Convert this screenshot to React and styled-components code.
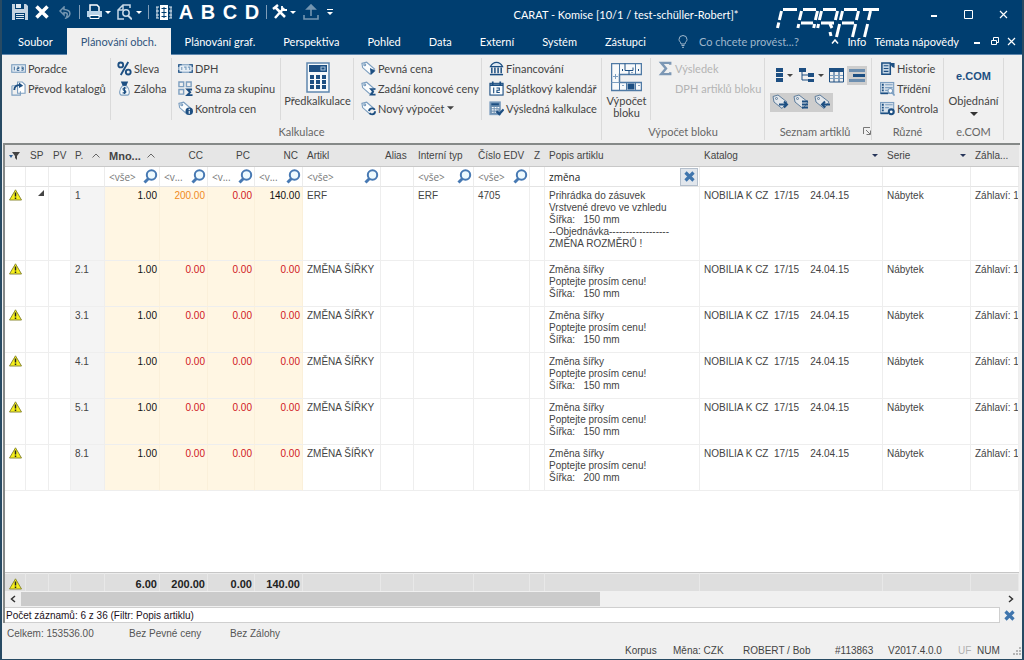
import styled, { createGlobalStyle } from "styled-components"

const NAVY = "#003e70"
const INK = "#1d4f82"
const SOFT = "#7d9fc0"

const GlobalStyle = createGlobalStyle`
* { box-sizing: border-box; }
body { margin: 0; background: #f0f0f0; }
button, input {
  font: inherit;
  color: inherit;
  border: 0;
  padding: 0;
  margin: 0;
  background: none;
}
svg { display: block; flex: none; }
`

const Window = styled.div`
display:flex;
flex-direction:column;
min-height:100vh;
border:solid #274a63;
border-width:0 2px 1px 2px;
background:#f0f0f0;
font-family:Lato, "Noto Sans", sans-serif;
font-size:11px;
color:#444;
`

/* header */
const Header = styled.header`
position:relative;
background:${NAVY};
color:#fff;
`
const TitleBar = styled.div`
display:flex;
align-items:center;
height:28px;
padding:0 1px 4px 8px;
`
const QuickTools = styled.div`
display:flex;
align-items:center;
`
const ToolButton = styled.button`
display:flex;
align-items:center;
justify-content:center;
gap:2px;
width:${props => props.$w || 22}px;
height:22px;
opacity:${props => props.$dim ? 0.45 : 1};
`
const LetterButton = styled(ToolButton)`
font-family:"Liberation Sans", Arial, sans-serif;
font-size:20px;
font-weight:bold;
line-height:22px;
`
const ToolLine = styled.span`
width:1px;
height:14px;
margin:0 3px;
background:#7f9db8;
`
const Title = styled.h1`
flex:1;
margin:0;
padding-top:5px;
font-size:11px;
font-weight:normal;
line-height:16px;
text-align:center;
white-space:nowrap;
`
const WindowButtons = styled.div`
display:flex;
padding-top:4px;
`
const WindowButton = styled.button`
display:flex;
align-items:center;
justify-content:center;
width:35px;
height:20px;
`
const Logo = styled.svg`
position:absolute;
right:142px;
top:6px;
`
const TabBar = styled.nav`
display:flex;
align-items:stretch;
height:27px;
padding-left:2px;
border-bottom:1px solid #5d86ad;
white-space:nowrap;
`
const Tab = styled.button`
padding:0 14px;
line-height:26px;
height:27px;
background:${props => props.$active ? "#f0f0f0" : "none"};
color:${props => props.$active ? "#31557d" : "#fff"};
`
const AskLabel = styled.label`
display:flex;
align-items:center;
gap:11px;
padding-left:18px;
flex:1;
min-width:0;
color:#9fb6cb;
`
const AskInput = styled.input`
flex:1;
min-width:0;
width:100px;
&::placeholder { color:#9fb6cb; opacity:1; }
`
const TabTools = styled.div`
display:flex;
align-items:center;
`
const TabTool = styled.button`
display:flex;
align-items:center;
justify-content:center;
height:26px;
padding:0 4px;
`

/* ribbon */
const Ribbon = styled.section`
display:flex;
height:88px;
padding-top:3px;
background:#f0f0f0;
`
const Group = styled.div`
display:flex;
flex-direction:column;
flex:none;
width:${props => props.$w}px;
height:82px;
border-right:1px solid #dadada;
`
const GroupBody = styled.div`
display:flex;
height:62px;
`
const GroupLabel = styled.div`
display:flex;
align-items:center;
justify-content:center;
height:20px;
padding-top:2px;
color:#666;
`
const Launcher = styled.button`
margin-left:13px;
margin-right:-15px;
`
const Col = styled.div`
display:flex;
flex-direction:column;
flex:none;
width:${props => props.$w}px;
padding-left:${props => props.$pad || 6}px;
border-right:${props => props.$last ? "0" : "1px solid #dadada"};
`
const Command = styled.button`
display:flex;
align-items:center;
gap:2px;
height:20px;
white-space:nowrap;
text-align:left;
color:${props => props.$off ? "#b4b4b4" : "#444"};
`
const BigCommand = styled.button`
display:flex;
flex-direction:column;
align-items:center;
gap:${props => props.$gap || 0}px;
width:100%;
padding-top:2px;
line-height:12px;
`
const BigIcon = styled.span`
display:flex;
align-items:center;
height:34px;
`
const EcomMark = styled.span`
height:30px;
line-height:32px;
font-family:"Liberation Sans", Arial, sans-serif;
font-size:11px;
font-weight:bold;
color:${INK};
`
const ListTools = styled.div`
display:flex;
align-items:center;
height:${props => props.$h}px;
padding-left:5px;
`
const ListTool = styled.button`
display:flex;
align-items:center;
justify-content:center;
gap:4px;
width:${props => props.$w || 21}px;
height:19px;
background:${props => props.$on ? "#cdcdcd" : "none"};
`

/* grid */
const GridFrame = styled.main`
display:flex;
flex-direction:column;
flex:1;
margin:0 2px 0 1px;
padding-right:1px;
border-top:2px solid #858988;
border-left:2px solid #858988;
font-family:"Liberation Sans", Arial, sans-serif;
font-size:10px;
`
const GridScroll = styled.div`
flex:1;
overflow:hidden;
background:#fff;
border-bottom:1px solid #c6c6c6;
`
const Table = styled.table`
width:100%;
table-layout:fixed;
border-collapse:separate;
border-spacing:0;
`
const Th = styled.th`
height:22px;
padding:0 5px 0 4px;
overflow:hidden;
white-space:nowrap;
background:#e6e6e6;
border-bottom:1px solid #c8c8c8;
font-size:${props => props.$bold ? 11 : 10}px;
font-weight:${props => props.$bold ? "bold" : "normal"};
text-align:${props => props.$num ? "right" : "left"};
`
const HeadInner = styled.span`
display:flex;
align-items:center;
justify-content:space-between;
`
const FilterTd = styled.td`
height:20px;
padding:0;
border-right:1px solid #ececec;
border-bottom:1px solid #e4e4e4;
`
const FilterBox = styled.div`
display:flex;
align-items:center;
justify-content:space-between;
height:19px;
padding:0 1px 0 4px;
font-family:"Open Sans", "Noto Sans", sans-serif;
`
const FilterInput = styled.input`
flex:1;
min-width:0;
width:10px;
color:#222;
&::placeholder { color:#777; opacity:1; }
`
const ClearButton = styled.button`
display:flex;
align-items:center;
justify-content:center;
width:18px;
height:18px;
border:1px solid #b4bfcc;
background:#e1e6ec;
`
const Td = styled.td`
height:${props => props.$tall ? 74 : 46}px;
padding:${props => props.$icon ? "2px 0 0 4px" : "3px 2px 0 4px"};
overflow:hidden;
vertical-align:top;
white-space:pre;
line-height:12px;
text-align:${props => props.$num ? "right" : "left"};
color:${props => props.$color || "#444"};
background:${props => props.$bg || "#fff"};
border-right:1px solid ${props => props.$bg === "#fff6e3" ? "#fbf0da" : "#eeeeee"};
border-bottom:1px solid #eeeeee;
`
const TotalTd = styled.td`
height:17px;
padding:3px 2px 0 4px;
overflow:hidden;
font-size:11px;
line-height:14px;
font-weight:bold;
text-align:${props => props.$num ? "right" : "left"};
color:#222;
background:#dedede;
border-top:1px solid #ededed;
border-right:1px solid #e8e8e8;
`
const ScrollBar = styled.div`
display:flex;
align-items:center;
height:16px;
background:#f0f0f0;
`
const ScrollButton = styled.button`
display:flex;
align-items:center;
justify-content:center;
width:16px;
height:16px;
`
const ScrollTrack = styled.div`
flex:1;
height:14px;
`
const ScrollThumb = styled.div`
width:59%;
height:14px;
background:#cbcbcb;
`
const CountBar = styled.div`
display:flex;
align-items:center;
height:16px;
color:#1c1020;
`
const CountText = styled.div`
flex:1;
height:16px;
padding-left:1px;
line-height:15px;
background:#fff;
border:solid #cfcfcf;
border-width:1px 1px 1px 0;
`
const CountClose = styled.button`
display:flex;
justify-content:center;
width:19px;
`

/* status bar */
const Status = styled.footer`
padding:3px 0 0 5px;
font-family:"Liberation Sans", Arial, sans-serif;
font-size:10px;
color:#555;
white-space:nowrap;
`
const StatusTop = styled.div`
display:flex;
height:16px;
line-height:16px;
`
const StatusItem = styled.span`
width:${props => props.$w ? props.$w + "px" : "auto"};
color:${props => props.$off ? "#b0b0b0" : "inherit"};
`
const StatusBottom = styled.div`
display:flex;
justify-content:flex-end;
align-items:center;
height:17px;
color:#444;
`

const Caret = ({ color = "#fff", w = 6 }) => (
  <svg width={w} height={w > 6 ? 4 : 3} viewBox="0 0 8 4" fill={color} aria-hidden="true"><path d="M0 0h8L4 4z" /></svg>
)

const Svg = ({ w = 15, h = 15, box = "0 0 16 16", children }) => (
  <svg width={w} height={h} viewBox={box} fill="none" stroke={INK} strokeWidth="1.2" aria-hidden="true">{children}</svg>
)

const TagShape = () => (
  <g>
    <path d="M1 2.5l5-1.2 8.5 7.2-4.8 5.5L1.7 7z" fill="#fafcfd" stroke={SOFT} />
    <circle cx="4" cy="4" r="1" stroke={SOFT} />
  </g>
)

const icons = {
  counter: <Svg><rect x="0.8" y="4" width="14.6" height="8" stroke={SOFT} fill="#e6eef5" /><path d="M3.5 6v4M6.500 6.500h2v1.500h-2v2h2.400M11 6.500h2v3.300h-2M11.300 8h1.600" strokeWidth="0.9" /></Svg>,
  transfer: <Svg><path d="M7 1h5l3 3v9H7z" stroke={SOFT} fill="#fff" /><path d="M1 5h6M1 5v10h9v-4" stroke={SOFT} fill="none" /><path d="M3.500 9.500c0-4 3-5.500 6-5" strokeWidth="2" /><path d="M8.500 1.500v6L13 5z" fill={INK} stroke="none" /></Svg>,
  percent: <Svg><circle cx="4" cy="4.200" r="2.600" strokeWidth="2" /><circle cx="12" cy="11.800" r="2.600" strokeWidth="2" /><path d="M12 1L4 15" strokeWidth="2" /></Svg>,
  bag: <Svg><path d="M6 5C2 9 2 15 5 15h6c3 0 3-6-1-10z" fill="#f5f9fb" stroke={SOFT} /><path d="M5 1h6L9.500 4.500h-3z" fill={INK} /><path d="M10 7.500H7.500c-1.500 0-1.500 2.200 0 2.500 2.500.3 2.500 2.700.5 2.700H6M8 6.300v7.500" /></Svg>,
  vat: <Svg><rect x="0.800" y="4" width="14.400" height="8" fill="#e6eef5" stroke={SOFT} /><path d="M0.800 6.500V4H4M12 4h3.200v2.500M0.800 9.500V12H4M12 12h3.200V9.500" /><path d="M4 6.500v3M6.500 6.500h2v3M10.500 6.500h2v3" stroke={SOFT} /></Svg>,
  sum: <Svg><path d="M1 1h5v5H1zM9 1h5v5H9zM1 9h5v5H1z" stroke={SOFT} strokeWidth="1.500" /><path d="M15 9H10l3 3-3 3h5.500" strokeWidth="2" /></Svg>,
  check: <Svg><TagShape /><circle cx="12" cy="11" r="4" fill={INK} stroke="none" /><path d="M12 10.500v3M12 8.300v1.200" stroke="#fff" /></Svg>,
  fixed: <Svg><TagShape /><path d="M9.500 7.500l6 3-5 4.500z" fill={INK} stroke="none" /></Svg>,
  final: <Svg><TagShape /><path d="M15.500 8.500h-5l2.500 3-2.500 3h5" strokeWidth="1.800" /></Svg>,
  renew: <Svg><TagShape /><circle cx="11.800" cy="11" r="3.200" strokeWidth="2" fill="#f0f0f0" strokeDasharray="8 2" /></Svg>,
  bank: <Svg><path d="M1.500 6C3 3 6 1.500 8 1.500S13 3 14.500 6z" fill="#dce7f1" /><path d="M3 7v6M6.300 7v6M9.700 7v6M13 7v6" strokeWidth="1.600" /><path d="M1 14.500h14" strokeWidth="1.600" /></Svg>,
  calendar: <Svg><rect x="1" y="2.500" width="14" height="12.500" fill="#fafcfd" /><path d="M1 4.300h14M4 0.500v3M12 0.500v3" strokeWidth="1.800" /><path d="M5 7v6M8 7.500h3v2.300H8.500v2.500H11.500" /></Svg>,
  result: <Svg><rect x="1" y="1" width="11" height="13.500" fill="#6d8fb0" stroke={SOFT} /><path d="M2.500 3.500h8" strokeWidth="2" /><path d="M3 7h8M3 9.500h7M3 12h5" strokeDasharray="2 1" stroke="#fff" /><path d="M8 11l3 3 4.500-5" strokeWidth="2.400" /></Svg>,
  sigma: <Svg><path d="M13 4V2H3.500l5 6-5 6H13v-2" stroke="#7c97b4" strokeWidth="2.600" /></Svg>,
  blank: <Svg />,
  history: <Svg><path d="M2 2h9v12H2z" fill="#c5d6e5" strokeWidth="1.600" /><path d="M4 5h5M4 8h5M4 11h5" /><path d="M10 2h5.500v5.500l-2.500-1z" fill={INK} stroke="none" /></Svg>,
  sort: <Svg><rect x="0.600" y="1.600" width="14" height="11.500" stroke={SOFT} fill="#d6e1eb" /><path d="M2 4h2M2 7h2M2 10h2" strokeWidth="2" /><path d="M5.500 4h8M5.500 7h8M5.500 10h3" stroke={SOFT} /><path d="M0.600 13.200h8" strokeWidth="1.800" /><circle cx="11" cy="10.500" r="2.500" fill="#fff" stroke={SOFT} /><path d="M13 12.500l2.500 3" stroke={SOFT} strokeWidth="1.800" /></Svg>,
  audit: <Svg><rect x="0.600" y="1.600" width="14" height="11.500" stroke={SOFT} fill="#d6e1eb" /><path d="M2 4h2M2 7h2M2 10h2" strokeWidth="2" /><path d="M5.500 4h8M5.500 7h4" stroke={SOFT} /><path d="M0.600 13.200h8" strokeWidth="1.800" /><circle cx="12" cy="11.500" r="2.600" strokeWidth="2.200" fill="#fff" /></Svg>,
}

const CalculatorIcon = () => (
  <svg width="24" height="31" viewBox="0 0 24 31" aria-hidden="true">
    <rect x="1" y="1" width="22" height="29" fill="#f6f9fb" stroke="#5f87ae" strokeWidth="1.500" />
    <rect x="3" y="3" width="18" height="7" fill={INK} />
    <rect x="15" y="5" width="4" height="3" fill="none" stroke="#a9c3da" />
    {[13, 18, 23].map(y => [4, 10, 16].map(x => <rect key={x + "-" + y} x={x} y={y} width="4" height="4" fill={INK} />))}
  </svg>
)

const KitchenIcon = () => (
  <svg width="31" height="29" viewBox="0 0 31 29" fill="none" stroke={INK} aria-hidden="true">
    <path d="M0.500 0.500h30v11h-22v8h22v8h-30z" fill="#f8fafb" stroke="#4f7aa5" strokeWidth="1.500" />
    <path d="M8.500 11.500v-11M8.500 19.500v8M15.500 19.500v8M24.500 19.500v8M24.500 0.500v11" stroke="#4f7aa5" />
    <path d="M14 0.500v7h8v-3M18 7.500v4" />
    <path d="M4.500 11v5M2 13.500h5" stroke={SOFT} />
    <path d="M0.500 19.500h8" stroke={SOFT} />
    <rect x="17" y="21" width="6" height="5" fill={INK} />
    <path d="M11.500 6v2M27.500 6v2M21 9v1M12 22v1M28 22v1" />
  </svg>
)

const Magnifier = () => (
  <svg width="15" height="15" viewBox="0 0 15 15" fill="none" stroke="#4779b3" aria-hidden="true">
    <path d="M5.500 9.500L1.500 13.500" strokeWidth="3" />
    <circle cx="8.500" cy="6" r="4.700" fill="#eefaff" strokeWidth="2" />
  </svg>
)

const Warning = () => (
  <svg width="13" height="12" viewBox="0 0 13 12" aria-label="Varování" role="img">
    <path d="M6.500 0.800L12.500 11H0.500z" fill="#f6f01a" stroke="#8c8a36" strokeLinejoin="round" />
    <path d="M6.500 3.500v4M6.500 8.600v1.400" stroke="#222" strokeWidth="1.500" />
  </svg>
)

const BlueCross = () => (
  <svg width="11" height="11" viewBox="0 0 11 11" stroke="#3f75ad" strokeWidth="3.200" aria-hidden="true">
    <path d="M1.500 1.500l8 8M9.500 1.500l-8 8" />
  </svg>
)

const SortUp = () => (
  <svg width="8" height="5" viewBox="0 0 8 5" fill="none" stroke="#666" aria-hidden="true"><path d="M0.500 4.500L4 1l3.500 3.500" /></svg>
)

const TagTool = ({ children }) => (
  <svg width="17" height="16" viewBox="0 0 17 16" fill="none" stroke="#5f7e9d" aria-hidden="true">
    <path d="M1 2.500l5-1.500 9 7-5 6.500L2 8z" fill="#e2e6ea" />
    <circle cx="4.500" cy="4.500" r="1" />
    <g stroke={INK} strokeWidth="2">{children}</g>
  </svg>
)

const CaratLogo = () => (
  <Logo width="104" height="34" viewBox="0 0 104 34" fill="none" stroke="#fff" strokeWidth="3" aria-label="CARAT" role="img">
    <path d="M7 3.500H21M5.500 5L3.400 14M2.800 16.500L1.500 22" />
    <path d="M27 3.500H40M25.500 5L23.400 14M22.800 18L21.900 22M41.500 5L39.400 14M38.600 18L37.700 22M25 17H37" />
    <path d="M47 3.500H60M45.500 5L43.400 14M42.600 18L41.700 22M61.500 5L59.400 14M45 17H58M54 18L56 22" />
    <path d="M68 3.500H81M66.500 5L64.400 14M63.600 18L60.500 31M82.500 5L80.400 14M79.600 18L76.500 31M66 17H78M54 26L55 30" />
    <path d="M87 3.500H103M94.500 5L92.400 14M91.600 18L88.500 31" />
  </Logo>
)

const tabs = ["Soubor", "Plánování obch.", "Plánování graf.", "Perspektiva", "Pohled", "Data", "Externí", "Systém", "Zástupci"]

const columns = [
  { w: 21 },
  { w: 23, label: "SP" },
  { w: 22, label: "PV" },
  { w: 34, label: "P.", sort: true, bg: "#f4f4f4" },
  { w: 55, label: "Mno...", sort: true, bold: true, filter: "<vše>", num: true, bg: "#fff6e3" },
  { w: 48, label: "CC", filter: "<v...", num: true, bg: "#fff6e3" },
  { w: 47, label: "PC", filter: "<v...", num: true, bg: "#fff6e3" },
  { w: 48, label: "NC", filter: "<v...", num: true, bg: "#fff6e3" },
  { w: 78, label: "Artikl", filter: "<vše>" },
  { w: 33, label: "Alias" },
  { w: 60, label: "Interní typ", filter: "<vše>" },
  { w: 56, label: "Číslo EDV", filter: "<vše>" },
  { w: 15, label: "Z" },
  { w: 155, label: "Popis artiklu", value: "změna" },
  { w: 183, label: "Katalog", drop: true },
  { w: 88, label: "Serie", drop: true },
  { label: "Záhla..." },
]

const change = (pos, width) => ({
  pos,
  cc: "0.00",
  nc: "0.00",
  article: "ZMĚNA ŠÍŘKY",
  text: `Změna šířky\nPoptejte prosím cenu!\nŠířka:   ${width} mm`,
})

const rows = [
  {
    pos: "1",
    cc: "200.00",
    nc: "140.00",
    article: "ERF",
    type: "ERF",
    edv: "4705",
    tall: true,
    text: "Prihrádka do zásuvek\nVrstvené drevo ve vzhledu\nŠířka:   150 mm\n--Objednávka------------------\nZMĚNA ROZMĚRŮ !",
  },
  change("2.1", 150),
  change("3.1", 150),
  change("4.1", 150),
  change("5.1", 150),
  change("8.1", 200),
]

const totals = { 4: "6.00", 5: "200.00", 6: "0.00", 7: "140.00" }

const RED = "#d0161c"

const Cols = () => (
  <colgroup>
    {columns.map((c, i) => <col key={i} width={c.w} />)}
  </colgroup>
)

const Cmd = ({ icon, children, off, menu }) => (
  <Command $off={off} disabled={off}>
    {icons[icon]}
    <span>{children}</span>
    {menu && <Caret color="#444" w={7} />}
  </Command>
)

const AppHeader = () => (
  <Header>
    <TitleBar>
      <QuickTools>
        <ToolButton $w={20} aria-label="Uložit">
          <svg width="16" height="16" viewBox="0 0 16 16"><path d="M0 0h14l2 2v14H0z" fill="#c3d3e0" /><path d="M3 0h9v5H3zM3 9h10v7H3z" fill={NAVY} /><path d="M4 0h5v4H4zM4 10h8v1H4zM4 12h8v1H4zM4 14h8v1H4z" fill="#dfe9f1" /></svg>
        </ToolButton>
        <ToolButton $w={24} aria-label="Zavřít">
          <svg width="14" height="14" viewBox="0 0 14 14" stroke="#fff" strokeWidth="3.500"><path d="M1.500 1.500l11 11M12.500 1.500l-11 11" /></svg>
        </ToolButton>
        <ToolButton $w={22} $dim aria-label="Zpět">
          <svg width="13" height="13" viewBox="0 0 13 13" fill="none" stroke="#fff" strokeWidth="1.500"><path d="M5 1L1 5l4 4V6.500c4 0 4 2 2 5.500 5-2 6-8-2-8.500z" /></svg>
        </ToolButton>
        <ToolLine />
        <ToolButton $w={30} aria-label="Tisk">
          <svg width="17" height="16" viewBox="0 0 17 16"><path d="M4 7V1h7l2 2v4" fill="none" stroke="#fff" strokeWidth="1.500" /><path d="M1 7h15v6H1z" fill="#b9d3e8" /><path d="M4 11.500h9v3H4z" fill={NAVY} stroke="#fff" /></svg>
          <Caret />
        </ToolButton>
        <ToolButton $w={32} aria-label="Náhled">
          <svg width="17" height="16" viewBox="0 0 17 16" fill="none" stroke="#c6d8e6" strokeWidth="1.500"><path d="M7 15H1V6l5-5h7v3M6 1v5H1M14 15h1" /><circle cx="9" cy="9" r="3.200" /><path d="M11 11.500l3.500 3.500" strokeWidth="2" /></svg>
          <Caret />
        </ToolButton>
        <ToolLine />
        <ToolButton $w={23} aria-label="Seznam">
          <svg width="16" height="15" viewBox="0 0 16 15"><path d="M4 0h8v15H4z" fill="#fff" /><path d="M5.500 3.500h5M5.500 7.500h5M5.500 11.500h5M8 2v11" stroke={NAVY} /><path d="M0 2h3M0 6h3M0 10h3M0 13h3M13 2h3M13 6h3M13 10h3M13 13h3M1 2v11M15 2v11" stroke="#dfe9f1" /></svg>
        </ToolButton>
        {["A", "B", "C", "D"].map(letter => <LetterButton key={letter}>{letter}</LetterButton>)}
        <ToolLine />
        <ToolButton $w={28} aria-label="Nástroje">
          <svg width="16" height="16" viewBox="0 0 16 16" stroke="#fff" strokeWidth="2.500" fill="none"><path d="M3 14L12 4M3 3l10 10M1 5l5-4" /><path d="M10 2v4h5" strokeWidth="1.800" /></svg>
          <Caret />
        </ToolButton>
        <ToolButton $w={26} $dim aria-label="Export">
          <svg width="16" height="16" viewBox="0 0 16 16" stroke="#fff" strokeWidth="1.600" fill="none"><path d="M1 11v4h14v-4M8 12V2" /><path d="M4 5l4-4 4 4z" fill="#fff" /></svg>
        </ToolButton>
        <ToolButton $w={12} aria-label="Přizpůsobit">
          <svg width="6" height="7" viewBox="0 0 6 7" fill="#fff"><path d="M0 0h6v1H0zM0 3h6L3 6z" /></svg>
        </ToolButton>
      </QuickTools>
      <Title>CARAT - Komise [10/1 / test-schüller-Robert]*</Title>
      <WindowButtons>
        <WindowButton aria-label="Minimalizovat"><svg width="8" height="8" stroke="#fff" strokeWidth="2"><path d="M1 6h6" /></svg></WindowButton>
        <WindowButton aria-label="Maximalizovat"><svg width="9" height="9" fill="none" stroke="#fff"><path d="M0.500 0.500h8v8h-8z" /></svg></WindowButton>
        <WindowButton aria-label="Zavřít okno"><svg width="9" height="9" stroke="#fff" strokeWidth="1.200"><path d="M1 1l7 7M8 1l-7 7" /></svg></WindowButton>
      </WindowButtons>
    </TitleBar>
    <TabBar>
      {tabs.map((t, i) => <Tab key={t} $active={i === 1}>{t}</Tab>)}
      <AskLabel>
        <svg width="10" height="13" viewBox="0 0 10 13" fill="none" stroke="#9fb6cb"><path d="M3 9C3 7 1 6.500 1 4.500a4 4 0 018 0C9 6.500 7 7 7 9zM3.500 10.500h3M4 12.300h2" /></svg>
        <AskInput placeholder="Co chcete provést...?" aria-label="Co chcete provést" />
      </AskLabel>
      <TabTools>
        <TabTool aria-label="Sbalit"><svg width="8" height="5" fill="none" stroke="#fff" strokeWidth="1.500"><path d="M1 4.500L4 1l3 3.500" /></svg></TabTool>
        <TabTool>Info</TabTool>
        <TabTool>Témata nápovědy</TabTool>
        <TabTool aria-label="Minimalizovat dokument"><svg width="16" height="8" stroke="#fff" strokeWidth="2"><path d="M7 6h6" /></svg></TabTool>
        <TabTool aria-label="Obnovit dokument"><svg width="8" height="9" fill="none" stroke="#fff"><path d="M2.500 3V0.500h5v5H5.500M0.500 3.500h5v4h-5z" /></svg></TabTool>
        <TabTool aria-label="Zavřít dokument"><svg width="11" height="9" stroke="#fff" strokeWidth="1.200"><path d="M1 1l7 7M8 1l-7 7" /></svg></TabTool>
      </TabTools>
    </TabBar>
    <CaratLogo />
  </Header>
)

const AppRibbon = () => (
  <Ribbon>
    <Group $w={600}>
      <GroupBody>
        <Col $w={109} $pad={9}>
          <Cmd icon="counter">Poradce</Cmd>
          <Cmd icon="transfer">Převod katalogů</Cmd>
        </Col>
        <Col $w={61}>
          <Cmd icon="percent">Sleva</Cmd>
          <Cmd icon="bag">Záloha</Cmd>
        </Col>
        <Col $w={109}>
          <Cmd icon="vat">DPH</Cmd>
          <Cmd icon="sum">Suma za skupinu</Cmd>
          <Cmd icon="check">Kontrola cen</Cmd>
        </Col>
        <Col $w={73} $pad={1}>
          <BigCommand $gap={1}>
            <BigIcon><CalculatorIcon /></BigIcon>
            Předkalkulace
          </BigCommand>
        </Col>
        <Col $w={128} $pad={7}>
          <Cmd icon="fixed">Pevná cena</Cmd>
          <Cmd icon="final">Zadání koncové ceny</Cmd>
          <Cmd icon="renew" menu>Nový výpočet</Cmd>
        </Col>
        <Col $w={118} $pad={7} $last>
          <Cmd icon="bank">Financování</Cmd>
          <Cmd icon="calendar">Splátkový kalendář</Cmd>
          <Cmd icon="result">Výsledná kalkulace</Cmd>
        </Col>
      </GroupBody>
      <GroupLabel>Kalkulace</GroupLabel>
    </Group>
    <Group $w={163}>
      <GroupBody>
        <Col $w={49} $pad={1}>
          <BigCommand $gap={1}>
            <BigIcon><KitchenIcon /></BigIcon>
            <span>Výpočet<br />bloku</span>
          </BigCommand>
        </Col>
        <Col $w={113} $pad={7} $last>
          <Cmd icon="sigma" off>Výsledek</Cmd>
          <Cmd icon="blank" off>DPH artiklů bloku</Cmd>
        </Col>
      </GroupBody>
      <GroupLabel>Výpočet bloku</GroupLabel>
    </Group>
    <Group $w={107}>
      <GroupBody>
        <div>
          <ListTools $h={34}>
            <ListTool $w={28} aria-label="Seznam">
              <svg width="8" height="15" fill={INK}><path d="M1 0h7v4H1zM1 5h7v4H1zM1 10h7v4H1z" /></svg>
              <Caret color="#444" />
            </ListTool>
            <ListTool $w={27} aria-label="Strom">
              <svg width="15" height="15" fill={INK}><path d="M0 0h7v4H0zM9 5h6v4H9zM9 11h6v3H9z" /><path d="M3 4v8h6M3 7h6" fill="none" stroke={INK} /></svg>
              <Caret color="#444" />
            </ListTool>
            <ListTool $w={22} aria-label="Sloupce">
              <svg width="15" height="15" fill={INK}><path d="M0 0h15v4H0z" /><path d="M0.500 4v10h14V4M5 4v10M10 4v10" fill="none" stroke={INK} /><path d="M1 7.500h13M1 10.500h13" stroke={SOFT} /></svg>
            </ListTool>
            <ListTool $w={20} $on aria-label="Detail">
              <svg width="16" height="15" fill="none" stroke={INK}><path d="M0 2.500h16M0 12.500h16" stroke="#6d8fb0" strokeWidth="3" /><path d="M4 7.500h12" strokeWidth="3" /></svg>
            </ListTool>
          </ListTools>
          <ListTools $h={20}>
            <ListTool $on aria-label="Vpřed"><TagTool><path d="M7 10.500h8M12 7.500l3 3-3 3" /></TagTool></ListTool>
            <ListTool $on aria-label="Položky"><TagTool><path d="M9 7.500h6M9 10.500h6M9 13.500h6" /></TagTool></ListTool>
            <ListTool $on aria-label="Zpět"><TagTool><path d="M8 10.500h8M11 7.500l-3 3 3 3" /></TagTool></ListTool>
          </ListTools>
        </div>
      </GroupBody>
      <GroupLabel>
        Seznam artiklů
        <Launcher aria-label="Nastavení seznamu"><svg width="8" height="8" fill="none" stroke="#777"><path d="M0.500 7V0.500H7M3 3l4 4M7.500 3.500v4h-4" /></svg></Launcher>
      </GroupLabel>
    </Group>
    <Group $w={72}>
      <GroupBody>
        <Col $w={71} $pad={8} $last>
          <Cmd icon="history">Historie</Cmd>
          <Cmd icon="sort">Třídění</Cmd>
          <Cmd icon="audit">Kontrola</Cmd>
        </Col>
      </GroupBody>
      <GroupLabel>Různé</GroupLabel>
    </Group>
    <Group $w={60}>
      <GroupBody>
        <BigCommand $gap={5}>
          <EcomMark>e.COM</EcomMark>
          Objednání
          <Caret color="#333" w={8} />
        </BigCommand>
      </GroupBody>
      <GroupLabel>e.COM</GroupLabel>
    </Group>
  </Ribbon>
)

const HeadCell = ({ col, first }) => (
  <Th $bold={col.bold} $num={col.num && !col.sort}>
    {first && <svg width="11" height="9" viewBox="0 0 11 9"><path d="M3 1h8L8 5v4L6 7V5z" fill="#444" /><path d="M0 4h4L2 7z" fill="#2f5f95" /></svg>}
    {(col.sort || col.drop) ? (
      <HeadInner>
        {col.label}
        {col.sort ? <SortUp /> : <Caret color="#26355a" />}
      </HeadInner>
    ) : col.label}
  </Th>
)

const FilterCell = ({ col }) => (
  <FilterTd>
    {col.filter && (
      <FilterBox>
        <FilterInput placeholder={col.filter} aria-label={"Filtr " + col.label} />
        <button aria-label={"Hledat " + col.label}><Magnifier /></button>
      </FilterBox>
    )}
    {col.value && (
      <FilterBox>
        <FilterInput defaultValue={col.value} aria-label={"Filtr " + col.label} />
        <ClearButton aria-label="Zrušit filtr"><BlueCross /></ClearButton>
      </FilterBox>
    )}
  </FilterTd>
)

const Row = ({ row }) => {
  const values = [
    <Warning />,
    row.tall ? <svg width="14" height="8"><path d="M14 0v6H8z" fill="#444" /></svg> : "",
    "",
    row.pos,
    "1.00",
    row.cc,
    "0.00",
    row.nc,
    row.article,
    "",
    row.type,
    row.edv,
    "",
    row.text,
    "NOBILIA K CZ  17/15    24.04.15",
    "Nábytek",
    "Záhlaví: 1",
  ]
  const color = i => {
    if (i === 4) return "#111"
    if (i === 5 && row.tall) return "#f08a1c"
    if (i === 7 && row.tall) return "#111"
    return i > 4 && i < 8 ? RED : undefined
  }
  return (
    <tr>
      {values.map((v, i) => (
        <Td key={i} $tall={row.tall} $icon={i < 1} $num={columns[i].num} $bg={columns[i].bg} $color={color(i)}>{v}</Td>
      ))}
    </tr>
  )
}

const ArticleGrid = () => (
  <GridFrame>
    <GridScroll>
      <Table>
        <Cols />
        <thead>
          <tr>{columns.map((c, i) => <HeadCell key={i} col={c} first={i === 0} />)}</tr>
        </thead>
        <tbody>
          <tr>{columns.map((c, i) => <FilterCell key={i} col={c} />)}</tr>
          {rows.map(r => <Row key={r.pos} row={r} />)}
        </tbody>
      </Table>
    </GridScroll>
    <Table>
      <Cols />
      <tbody>
        <tr>
          {columns.map((c, i) => <TotalTd key={i} $num={c.num}>{i === 0 ? <Warning /> : totals[i]}</TotalTd>)}
        </tr>
      </tbody>
    </Table>
    <ScrollBar>
      <ScrollButton aria-label="Vlevo"><svg width="6" height="8" fill="none" stroke="#333" strokeWidth="1.500"><path d="M5 1L1.500 4 5 7" /></svg></ScrollButton>
      <ScrollTrack><ScrollThumb /></ScrollTrack>
      <ScrollButton aria-label="Vpravo"><svg width="6" height="8" fill="none" stroke="#333" strokeWidth="1.500"><path d="M1 1l3.500 3L1 7" /></svg></ScrollButton>
    </ScrollBar>
    <CountBar>
      <CountText>Počet záznamů: 6 z 36 (Filtr: Popis artiklu)</CountText>
      <CountClose aria-label="Zrušit filtr"><BlueCross /></CountClose>
    </CountBar>
  </GridFrame>
)

const StatusBar = () => (
  <Status>
    <StatusTop>
      <StatusItem $w={122}>Celkem: 153536.00</StatusItem>
      <StatusItem $w={101}>Bez Pevné ceny</StatusItem>
      <StatusItem>Bez Zálohy</StatusItem>
    </StatusTop>
    <StatusBottom>
      <StatusItem $w={48}>Korpus</StatusItem>
      <StatusItem $w={70}>Měna: CZK</StatusItem>
      <StatusItem $w={92}>ROBERT / Bob</StatusItem>
      <StatusItem $w={53}>#113863</StatusItem>
      <StatusItem $w={70}>V2017.4.0.0</StatusItem>
      <StatusItem $w={19} $off>UF</StatusItem>
      <StatusItem $w={35}>NUM</StatusItem>
      <svg width="10" height="10" fill="#b5b5b5"><path d="M7 1h2v2H7zM4 4h2v2H4zM7 4h2v2H7zM1 7h2v2H1zM4 7h2v2H4zM7 7h2v2H7z" /></svg>
    </StatusBottom>
  </Status>
)

const App = () => {
  return (
    <>
      <GlobalStyle />
      <Window>
        <AppHeader />
        <AppRibbon />
        <ArticleGrid />
        <StatusBar />
      </Window>
    </>
  )
}
export default App
